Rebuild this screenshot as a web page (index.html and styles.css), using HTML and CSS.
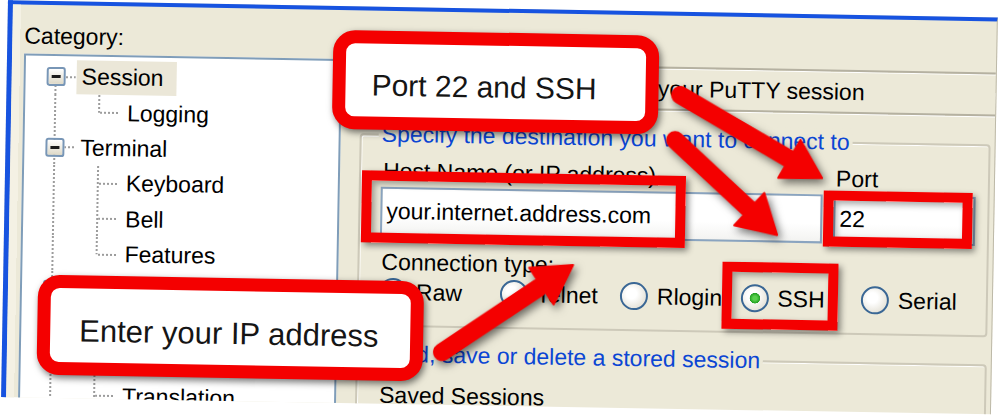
FILE: index.html
```html
<!DOCTYPE html>
<html>
<head>
<meta charset="utf-8">
<title>PuTTY Configuration</title>
<link rel="stylesheet" href="styles.css">
</head>
<body>
<div class="stage">
  <div class="window">
    <div class="left">
      <div class="cat">Category:</div>
      <div class="tree">
        <div class="row"><span class="g box first"><i class="mbox"></i></span><span class="lbl sel">Session</span></div>
        <div class="row"><span class="g vl"></span><span class="g ell"></span><span class="lbl">Logging</span></div>
        <div class="row"><span class="g box mid"><i class="mbox"></i></span><span class="lbl">Terminal</span></div>
        <div class="row"><span class="g vl"></span><span class="g tee"></span><span class="lbl">Keyboard</span></div>
        <div class="row"><span class="g vl"></span><span class="g tee"></span><span class="lbl">Bell</span></div>
        <div class="row"><span class="g vl"></span><span class="g ell"></span><span class="lbl">Features</span></div>
        <div class="row"><span class="g box mid"><i class="mbox"></i></span><span class="lbl">Window</span></div>
        <div class="row"><span class="g vl"></span><span class="g tee"></span><span class="lbl">Appearance</span></div>
        <div class="row"><span class="g vl"></span><span class="g tee"></span><span class="lbl">Behaviour</span></div>
        <div class="row"><span class="g vl"></span><span class="g tee"></span><span class="lbl">Translation</span></div>
      </div>
    </div>
    <div class="right">
      <div class="heading">Basic options for your PuTTY session</div>
      <div class="group g1">
        <div class="caption">Specify the destination you want to connect to</div>
        <div class="hostgrid">
          <div class="flabel">Host Name (or IP address)</div>
          <div class="flabel">Port</div>
          <div class="input">your.internet.address.com</div>
          <div class="input">22</div>
        </div>
        <div class="flabel ctype">Connection type:</div>
        <div class="radios">
          <div class="radio"><span class="dot"></span>Raw</div>
          <div class="radio"><span class="dot"></span>Telnet</div>
          <div class="radio"><span class="dot"></span>Rlogin</div>
          <div class="radio"><span class="dot on"></span>SSH</div>
          <div class="radio"><span class="dot"></span>Serial</div>
        </div>
      </div>
      <div class="group g2">
        <div class="caption">Load, save or delete a stored session</div>
        <div class="flabel saved">Saved Sessions</div>
      </div>
    </div>
  </div>

  <div class="mark m-host"></div>
  <div class="mark m-port"></div>
  <div class="mark m-ssh"></div>

  <svg class="arrows" width="1010" height="430" viewBox="0 0 1010 430">
    <g fill="#f40000" stroke="#f40000" stroke-linejoin="round">
      <line x1="681.7" y1="83.1" x2="795" y2="146.8" stroke-width="18" stroke-linecap="round"/>
      <polygon points="781.2,164.3 825.1,163.7 802.8,125.9" stroke-width="2"/>
      <line x1="677.4" y1="128.2" x2="755" y2="198" stroke-width="18" stroke-linecap="round"/>
      <polygon points="738.1,212.4 781.1,221.4 767.5,179.6" stroke-width="2"/>
      <line x1="448.1" y1="344.3" x2="544" y2="278" stroke-width="18" stroke-linecap="round"/>
      <polygon points="558.8,294.7 577.6,255 533.8,258.5" stroke-width="2"/>
    </g>
  </svg>

  <div class="callout c1">Port 22 and SSH</div>
  <div class="callout c2">Enter your IP address</div>
</div>
</body>
</html>
```

FILE: styles.css
```css
html, body {
  margin: 0;
  padding: 0;
  background: #ffffff;
  overflow: hidden;
}

body {
  width: 1000px;
  height: 418px;
  font-family: "Liberation Sans", Arial, sans-serif;
  font-size: 23px;
  color: #000;
  --dotv: repeating-linear-gradient(to bottom, #9c9c9c 0 2px, transparent 2px 4px);
  --doth: repeating-linear-gradient(to right, #9c9c9c 0 2px, transparent 2px 4px);
}

.stage {
  position: relative;
  width: 1010px;
  height: 430px;
  transform: rotate(1deg);
  transform-origin: 0 0;
}

/* ---------- dialog window ---------- */
.window {
  margin-left: 8px;
  width: 990px;
  height: 397px;
  box-sizing: border-box;
  border-top: 4px solid #1753e0;
  border-left: 5px solid #1753e0;
  border-right: 1px solid #bdb9a8;
  background: #ece9d8;
  display: grid;
  grid-template-columns: 330px 1fr;
  overflow: hidden;
}

.left {
  display: flex;
  flex-direction: column;
  padding: 18px 0 0 12px;
  background: linear-gradient(to right, #f4f1e4 0 8px, transparent 8px);
}

.cat {
  line-height: 26px;
  height: 26px;
}

.tree {
  margin-top: 5px;
  width: 318px;
  height: 420px;
  flex: none;
  box-sizing: border-box;
  border: 2px solid #7f9db9;
  background: #fff;
  padding-top: 3px;
}

.row {
  display: flex;
  height: 35.4px;
  padding-left: 9px;
}

.g {
  flex: none;
  width: 42px;
  height: 100%;
  display: flex;
  align-items: center;
  justify-content: center;
  background-repeat: no-repeat;
}

.g.vl {
  background-image: var(--dotv);
  background-size: 2px 100%;
  background-position: 20px 0;
}

.g.tee, .g.ell {
  width: 46px;
  background-image: var(--dotv), var(--doth);
  background-size: 2px 100%, 19px 2px;
  background-position: 22px 0, 24px 50%;
}

.g.ell {
  background-size: 2px 50%, 19px 2px;
}

.g.box {
  background-image: var(--dotv), var(--doth);
  background-size: 2px 100%, 10px 2px;
  background-position: 20px 0, 31px 50%;
}

.g.box.first {
  background-size: 2px 50%, 10px 2px;
  background-position: 20px 100%, 31px 50%;
}

.mbox {
  display: block;
  width: 19px;
  height: 19px;
  box-sizing: border-box;
  border: 2px solid #7896b6;
  border-radius: 3px;
  background:
    linear-gradient(#1b1b1b, #1b1b1b) center / 9px 3px no-repeat,
    linear-gradient(#ffffff, #ddd8c6);
}

.lbl {
  display: flex;
  align-items: center;
  align-self: center;
  height: 34px;
  padding: 0 5px;
  white-space: nowrap;
}

.lbl.sel {
  background: #ebe7d8;
  padding-right: 13px;
}

/* ---------- right panel ---------- */
.right {
  display: flex;
  flex-direction: column;
}

.heading {
  margin: 51px 0 0 7px;
  height: 44px;
  box-sizing: border-box;
  border-top: 2px solid #b5b1a1;
  border-bottom: 2px solid #b5b1a1;
  box-shadow: inset 0 1px 0 #fff, 0 1px 0 #fff;
  line-height: 40px;
  text-align: center;
  padding-left: 2px;
}

.group {
  margin: 28px 4px 0 19px;
  border: 2px solid #cdc9b9;
  border-radius: 4px;
  box-shadow: inset 1px 1px 0 #fff;
  padding: 0 0 19px 20px;
}

.g2 {
  margin-top: 27px;
  height: 120px;
}

.caption {
  width: fit-content;
  margin: -15px 0 0 -3px;
  padding: 0 3px;
  line-height: 26px;
  background: #ece9d8;
  color: #0b46d4;
}

.hostgrid {
  margin-top: 11px;
  display: grid;
  grid-template-columns: 442px 142px;
  grid-template-rows: 26px 49px;
  column-gap: 11px;
  row-gap: 3px;
}

.flabel {
  line-height: 26px;
  padding-left: 2px;
  white-space: nowrap;
}

.input {
  box-sizing: border-box;
  border: 2px solid #8aa4c0;
  background: linear-gradient(#ffffff 60%, #f3f3f1);
  line-height: 45px;
  padding-left: 4px;
}

.ctype {
  margin-top: 13px;
}

.radios {
  margin-top: 3px;
  display: grid;
  grid-template-columns: repeat(5, 120.5px);
  height: 28px;
}

.radio {
  display: flex;
  align-items: center;
  gap: 9px;
  white-space: nowrap;
}

.dot {
  flex: none;
  width: 28px;
  height: 28px;
  box-sizing: border-box;
  border: 2px solid #3a6795;
  border-radius: 50%;
  background: radial-gradient(circle at 40% 40%, #ffffff 25%, #d9d5c6 100%);
}

.dot.on {
  background:
    radial-gradient(circle, #58d04c 0 2px, #22a022 5px, transparent 5.5px),
    radial-gradient(circle at 40% 40%, #ffffff 25%, #d9d5c6 100%);
}

.saved {
  margin-top: 15px;
}

/* ---------- annotations (overlay) ---------- */
.mark {
  position: absolute;
  box-sizing: border-box;
  border: 10px solid #f40000;
  box-shadow: 3px 3px 6px rgba(0, 0, 0, 0.45), inset 3px 3px 6px rgba(0, 0, 0, 0.35);
}

.m-host { left: 365px; top: 164px; width: 324px; height: 72px; }
.m-port { left: 827px; top: 176px; width: 149px; height: 56px; }
.m-ssh  { left: 727px; top: 249px; width: 116px; height: 67px; }

.arrows {
  position: absolute;
  left: 0;
  top: 0;
  filter: drop-shadow(3px 4px 4px rgba(0, 0, 0, 0.55));
}

.callout {
  position: absolute;
  box-sizing: border-box;
  border: 13px solid #f40000;
  border-radius: 22px;
  background: #fff;
  color: #151515;
  white-space: nowrap;
  box-shadow: 2px 3px 7px rgba(0, 0, 0, 0.55);
}

.c1 {
  left: 334px;
  top: 24px;
  width: 326px;
  height: 99px;
  padding: 24px 0 0 26px;
  font-size: 30px;
  line-height: 36px;
}

.c2 {
  left: 43px;
  top: 274px;
  width: 386px;
  height: 100px;
  padding: 24px 0 0 29px;
  font-size: 31px;
  line-height: 38px;
}
```
